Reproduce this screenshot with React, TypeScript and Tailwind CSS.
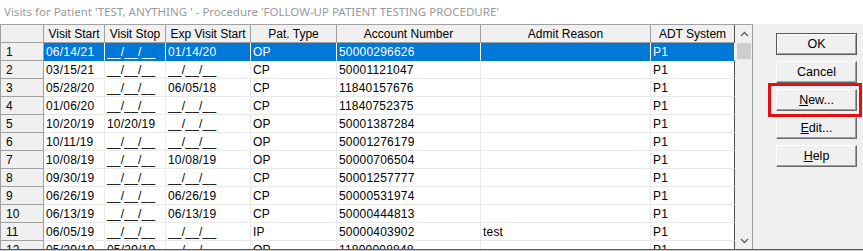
import React from "react";

type Visit = {
  n: string;
  start: string;
  stop: string;
  exp: string;
  type: string;
  account: string;
  reason: string;
  adt: string;
};

const BLANK = "__/__/__";

const visits: Visit[] = [
  { n: "1", start: "06/14/21", stop: BLANK, exp: "01/14/20", type: "OP", account: "50000296626", reason: "", adt: "P1" },
  { n: "2", start: "03/15/21", stop: BLANK, exp: BLANK, type: "CP", account: "50001121047", reason: "", adt: "P1" },
  { n: "3", start: "05/28/20", stop: BLANK, exp: "06/05/18", type: "CP", account: "11840157676", reason: "", adt: "P1" },
  { n: "4", start: "01/06/20", stop: BLANK, exp: BLANK, type: "CP", account: "11840752375", reason: "", adt: "P1" },
  { n: "5", start: "10/20/19", stop: "10/20/19", exp: BLANK, type: "OP", account: "50001387284", reason: "", adt: "P1" },
  { n: "6", start: "10/11/19", stop: BLANK, exp: BLANK, type: "OP", account: "50001276179", reason: "", adt: "P1" },
  { n: "7", start: "10/08/19", stop: BLANK, exp: "10/08/19", type: "OP", account: "50000706504", reason: "", adt: "P1" },
  { n: "8", start: "09/30/19", stop: BLANK, exp: BLANK, type: "CP", account: "50001257777", reason: "", adt: "P1" },
  { n: "9", start: "06/26/19", stop: BLANK, exp: "06/26/19", type: "CP", account: "50000531974", reason: "", adt: "P1" },
  { n: "10", start: "06/13/19", stop: BLANK, exp: "06/13/19", type: "CP", account: "50000444813", reason: "", adt: "P1" },
  { n: "11", start: "06/05/19", stop: BLANK, exp: BLANK, type: "IP", account: "50000403902", reason: "test", adt: "P1" },
  { n: "12", start: "05/29/19", stop: "05/29/19", exp: BLANK, type: "OP", account: "11800008848", reason: "", adt: "P1" },
];

// widths include the 1px right border of each column
const cols: Array<{ key: keyof Visit; label: string; w: string }> = [
  { key: "start", label: "Visit Start", w: "w-[61px]" },
  { key: "stop", label: "Visit Stop", w: "w-[61px]" },
  { key: "exp", label: "Exp Visit Start", w: "w-[85px]" },
  { key: "type", label: "Pat. Type", w: "w-[86px]" },
  { key: "account", label: "Account Number", w: "w-[144px]" },
  { key: "reason", label: "Admit Reason", w: "w-[170px]" },
  { key: "adt", label: "ADT System", w: "w-[84px]" },
];

function Chevron({ down }: { down?: boolean }) {
  return (
    <svg width="9" height="6" viewBox="0 0 9 6" className={down ? "rotate-180" : ""}>
      <path d="M1 5 L4.5 1.5 L8 5" fill="none" stroke="#606060" strokeWidth="1.4" />
    </svg>
  );
}

function Button({ children, isDefault }: { children: React.ReactNode; isDefault?: boolean }) {
  return (
    <div
      className={
        isDefault
          ? "w-[81px] h-[22px] flex items-center justify-center bg-[#f0f0f0] border border-[#5a5a5a] shadow-[inset_1px_1px_0_#ffffff,inset_-1px_-1px_0_#a0a0a0] text-[12.5px] text-black"
          : "w-[81px] h-[22px] flex items-center justify-center bg-[#f0f0f0] border border-t-white border-l-white border-b-[#6a6a6a] border-r-[#6a6a6a] shadow-[inset_-1px_-1px_0_#a0a0a0] text-[12.5px] text-black"
      }
    >
      {children}
    </div>
  );
}

export default function App() {
  return (
    <div className="w-[863px] h-[251px] overflow-hidden bg-white font-['Liberation_Sans',Arial,sans-serif] text-[12px] leading-none text-black">
      <div className="h-[24px] flex items-center pl-[4px] font-['Noto_Sans',sans-serif] text-[11.5px] text-[#999999]">
        Visits for Patient 'TEST, ANYTHING ' - Procedure 'FOLLOW-UP PATIENT TESTING PROCEDURE'
      </div>

      <div className="h-[225px] flex bg-[#f0f0f0]">
        {/* grid */}
        <div className="w-[753px] h-full flex border-t border-l border-r border-[#a0a0a0] bg-white overflow-hidden">
          <div className="w-[734px] flex flex-col">
            <div className="h-[18px] flex shrink-0 bg-[#f0f0f0]">
              <div className="w-[43px] border-r border-b border-[#a0a0a0]" />
              {cols.map((c) => (
                <div
                  key={c.key}
                  className={`${c.w} flex items-center justify-center border-r border-b border-[#a0a0a0] ${c.key === "adt" ? "border-r-[#505050]" : ""}`}
                >
                  {c.label}
                </div>
              ))}
            </div>
            {visits.map((v, i) => {
              const sel = i === 0;
              return (
                <div key={v.n} className="h-[18px] flex shrink-0">
                  <div className="w-[43px] flex items-center pl-[5px] bg-[#f0f0f0] border-r border-b border-[#a0a0a0]">
                    {v.n}
                  </div>
                  {cols.map((c) => (
                    <div
                      key={c.key}
                      className={`${c.w} flex items-center pl-[2px] border-r border-b whitespace-nowrap overflow-hidden tracking-[0.2px] ${
                        sel ? "bg-[#0078d7] text-white border-r-white border-b-[#0078d7]" : "border-[#e9e9e9]"
                      } ${c.key === "adt" ? "border-r-[#505050]" : ""}`}
                    >
                      {v[c.key]}
                    </div>
                  ))}
                </div>
              );
            })}
          </div>

          {/* scrollbar */}
          <div className="w-[17px] h-full flex flex-col bg-[#f0f0f0]">
            <div className="h-[18px] flex items-center justify-center pl-[2px]">
              <Chevron />
            </div>
            <div className="h-[16px] ml-[2px] mr-[1px] bg-[#cdcdcd]" />
            <div className="flex-1" />
            <div className="h-[17px] flex items-start justify-center pt-[6px] pl-[2px]">
              <Chevron down />
            </div>
          </div>
        </div>

        {/* buttons */}
        <div className="flex-1 flex flex-col gap-[6px] pl-[23px] pt-[9px]">
          <Button isDefault>OK</Button>
          <Button>Cancel</Button>
          <div className="relative w-[81px]">
            <Button>
              <span>
                <u className="underline-offset-1">N</u>ew...
              </span>
            </Button>
            <div className="absolute -left-[8px] -right-[5px] -top-[6px] -bottom-[6px] border-[3px] border-[#e50d0d]" />
          </div>
          <Button>
            <span>
              <u className="underline-offset-1">E</u>dit...
            </span>
          </Button>
          <Button>
            <span>
              <u className="underline-offset-1">H</u>elp
            </span>
          </Button>
        </div>
      </div>

      <div className="h-[1px] bg-[#5c5c5c]" />
      <div className="h-[1px] bg-[#c8c8c8]" />
    </div>
  );
}
